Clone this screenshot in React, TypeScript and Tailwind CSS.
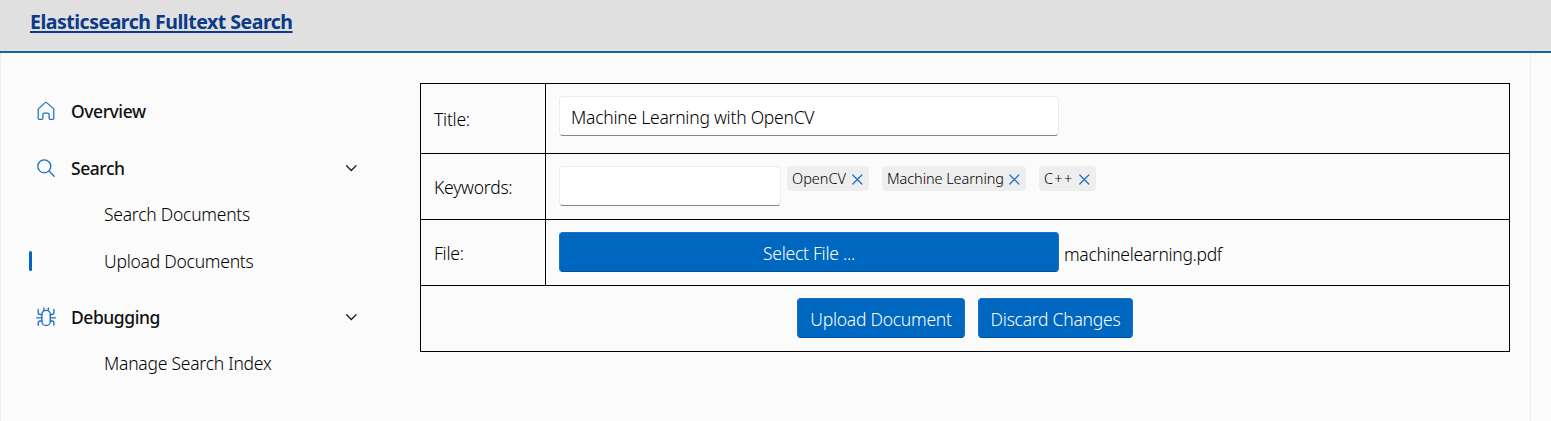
import type { ReactNode } from "react";

function HomeIcon() {
  return (
    <svg className="h-5 w-5" viewBox="0 0 20 20" fill="none" stroke="#1a70c2" strokeWidth="1.25" strokeLinejoin="round">
      <path d="M2.2 8.6c0-.5.2-.9.6-1.2l6.5-5.8c.4-.4 1-.4 1.400 0l6.500 5.800c.4.3.6.7.6 1.200v8.600c0 .7-.5 1.200-1.100 1.200h-2.500c-.6 0-1.100-.5-1.100-1.100v-3.800c0-.8-.6-1.300-1.300-1.300H8.200c-.7 0-1.300.5-1.300 1.300v3.800c0 .6-.5 1.100-1.100 1.100H3.300c-.6 0-1.100-.5-1.100-1.200Z" />
    </svg>
  );
}

function SearchIcon() {
  return (
    <svg className="h-5 w-5" viewBox="0 0 20 20" fill="none" stroke="#1a70c2" strokeWidth="1.3" strokeLinecap="round">
      <circle cx="8.300" cy="8.300" r="6.500" />
      <path d="M13 13l5.200 5.200" />
    </svg>
  );
}

function BugIcon() {
  return (
    <svg className="h-5 w-5" viewBox="0 0 20 20" fill="none" stroke="#1a70c2" strokeWidth="1.300" strokeLinecap="round">
      <rect x="5.900" y="3.400" width="8.400" height="15" rx="4" />
      <path d="M7.900 3.600V1M12.300 3.600V1M5.900 7.500H4.200c-1.200 0-2-.8-2-2V2.300M14.300 7.500h1.600c1.200 0 2-.8 2-2V2.300M5.800 10.800H.6M14.300 10.800h5.100M5.900 14H4.200c-1.200 0-2 .8-2 2v2.300M14.300 14h1.600c1.200 0 2 .8 2 2v2.300" />
    </svg>
  );
}

function ChevronIcon() {
  return (
    <svg className="h-3 w-3" viewBox="0 0 12 12" fill="none" stroke="#1f1f1f" strokeWidth="1.300" strokeLinecap="round">
      <path d="M1.600 3.700L6.300 8.500l4.700-4.800" />
    </svg>
  );
}

function DismissIcon() {
  return (
    <svg className="h-3 w-3" viewBox="0 0 12 12" fill="none" stroke="#1a70c2" strokeWidth="1.200" strokeLinecap="round">
      <path d="M1.800 2l9 9M10.800 2l-9 9" />
    </svg>
  );
}

function NavItem({ icon, label, expandable, className = "" }: { icon: ReactNode; label: string; expandable?: boolean; className?: string }) {
  return (
    <a className={`flex h-[46px] items-center pr-[43px] pl-[35px] font-medium tracking-[-0.45px] text-[#111111] ${className}`}>
      {icon}
      <span className="ml-[15px] flex-1 pt-px">{label}</span>
      {expandable && <ChevronIcon />}
    </a>
  );
}

function NavSubItem({ label, active, className = "" }: { label: string; active?: boolean; className?: string }) {
  return (
    <a className={`flex h-[46px] items-center pl-7 ${className}`}>
      <span className={`mr-[72px] h-5 w-[3px] rounded-full ${active ? "bg-[#0067c0]" : ""}`} />
      <span className="pt-px">{label}</span>
    </a>
  );
}

function Tag({ label, className = "" }: { label: string; className?: string }) {
  return (
    <span className="flex h-[25px] items-center gap-1 rounded bg-[#eeeeee] pr-[6px] pl-[5px] text-[14.500px]">
      <span className={`whitespace-nowrap ${className}`}>{label}</span>
      <DismissIcon />
    </span>
  );
}

function Button({ children, className = "" }: { children: ReactNode; className?: string }) {
  return (
    <button className={`h-10 rounded border border-[#1a74c6] border-b-[#00529a] bg-[#0067c0] pt-[3px] tracking-[-0.25px] whitespace-nowrap text-white ${className}`}>
      {children}
    </button>
  );
}

function Label({ children, className = "" }: { children: ReactNode; className?: string }) {
  return <div className={`flex w-[125px] items-center border-r border-black pl-[13px] ${className}`}>{children}</div>;
}

const field = "h-10 rounded border border-[#ececec] border-b-[#858585] bg-white px-[11px] pt-0.5 outline-none";

export default function App() {
  return (
    <div className="flex h-[421px] flex-col bg-[#fbfbfb] font-['Noto_Sans','Open_Sans',sans-serif] text-[17.500px] font-light tracking-[-0.24px] text-black">
      <header className="flex h-[53px] shrink-0 items-start border-b-2 border-[#1c619f] bg-[#e0e0e0] pt-[9px] pl-[30px]">
        <a className="text-[19.500px] leading-[26px] font-bold tracking-[-0.48px] text-[#0b3a86] underline decoration-2 underline-offset-2">
          Elasticsearch Fulltext Search
        </a>
      </header>
      <div className="mr-5 flex flex-1 border-x border-[#ececec]">
        <nav className="w-[399px] shrink-0 pt-[35px]">
          <NavItem icon={<HomeIcon />} label="Overview" />
          <NavItem icon={<SearchIcon />} label="Search" expandable className="mt-[11px]" />
          <NavSubItem label="Search Documents" />
          <NavSubItem label="Upload Documents" active className="mt-px" />
          <NavItem icon={<BugIcon />} label="Debugging" expandable className="mt-2.5" />
          <NavSubItem label="Manage Search Index" />
        </nav>
        <main className="flex-1 pt-[30px] pr-5 pl-5">
          <div className="border border-black">
            <div className="flex h-[70px] border-b border-black">
              <Label className="pt-0.5">Title:</Label>
              <div className="px-[13px] pt-3">
                <input className={`${field} w-[500px]`} defaultValue="Machine Learning with OpenCV" />
              </div>
            </div>
            <div className="flex h-[66px] border-b border-black">
              <Label className="pt-0.5">Keywords:</Label>
              <div className="flex items-start px-[13px] pt-3">
                <input className={`${field} mr-1.5 w-[222px]`} />
                <div className="flex gap-[13px]">
                  <Tag label="OpenCV" className="w-[55px] tracking-normal" />
                  <Tag label="Machine Learning" className="w-[117px] tracking-[-0.07px]" />
                  <Tag label="C++" className="w-[30px] tracking-[1.300px]" />
                </div>
              </div>
            </div>
            <div className="flex h-[66px] border-b border-black">
              <Label className="pt-0.5">File:</Label>
              <div className="flex items-start px-[13px] pt-3">
                <Button className="mr-[5px] w-[500px]">Select File ...</Button>
                <span className="pt-0.5 leading-10 tracking-[-0.32px]">machinelearning.pdf</span>
              </div>
            </div>
            <div className="flex h-[65px] justify-center gap-[13px] pt-3">
              <Button className="w-[168px]">Upload Document</Button>
              <Button className="w-[155px]">Discard Changes</Button>
            </div>
          </div>
        </main>
      </div>
    </div>
  );
}
